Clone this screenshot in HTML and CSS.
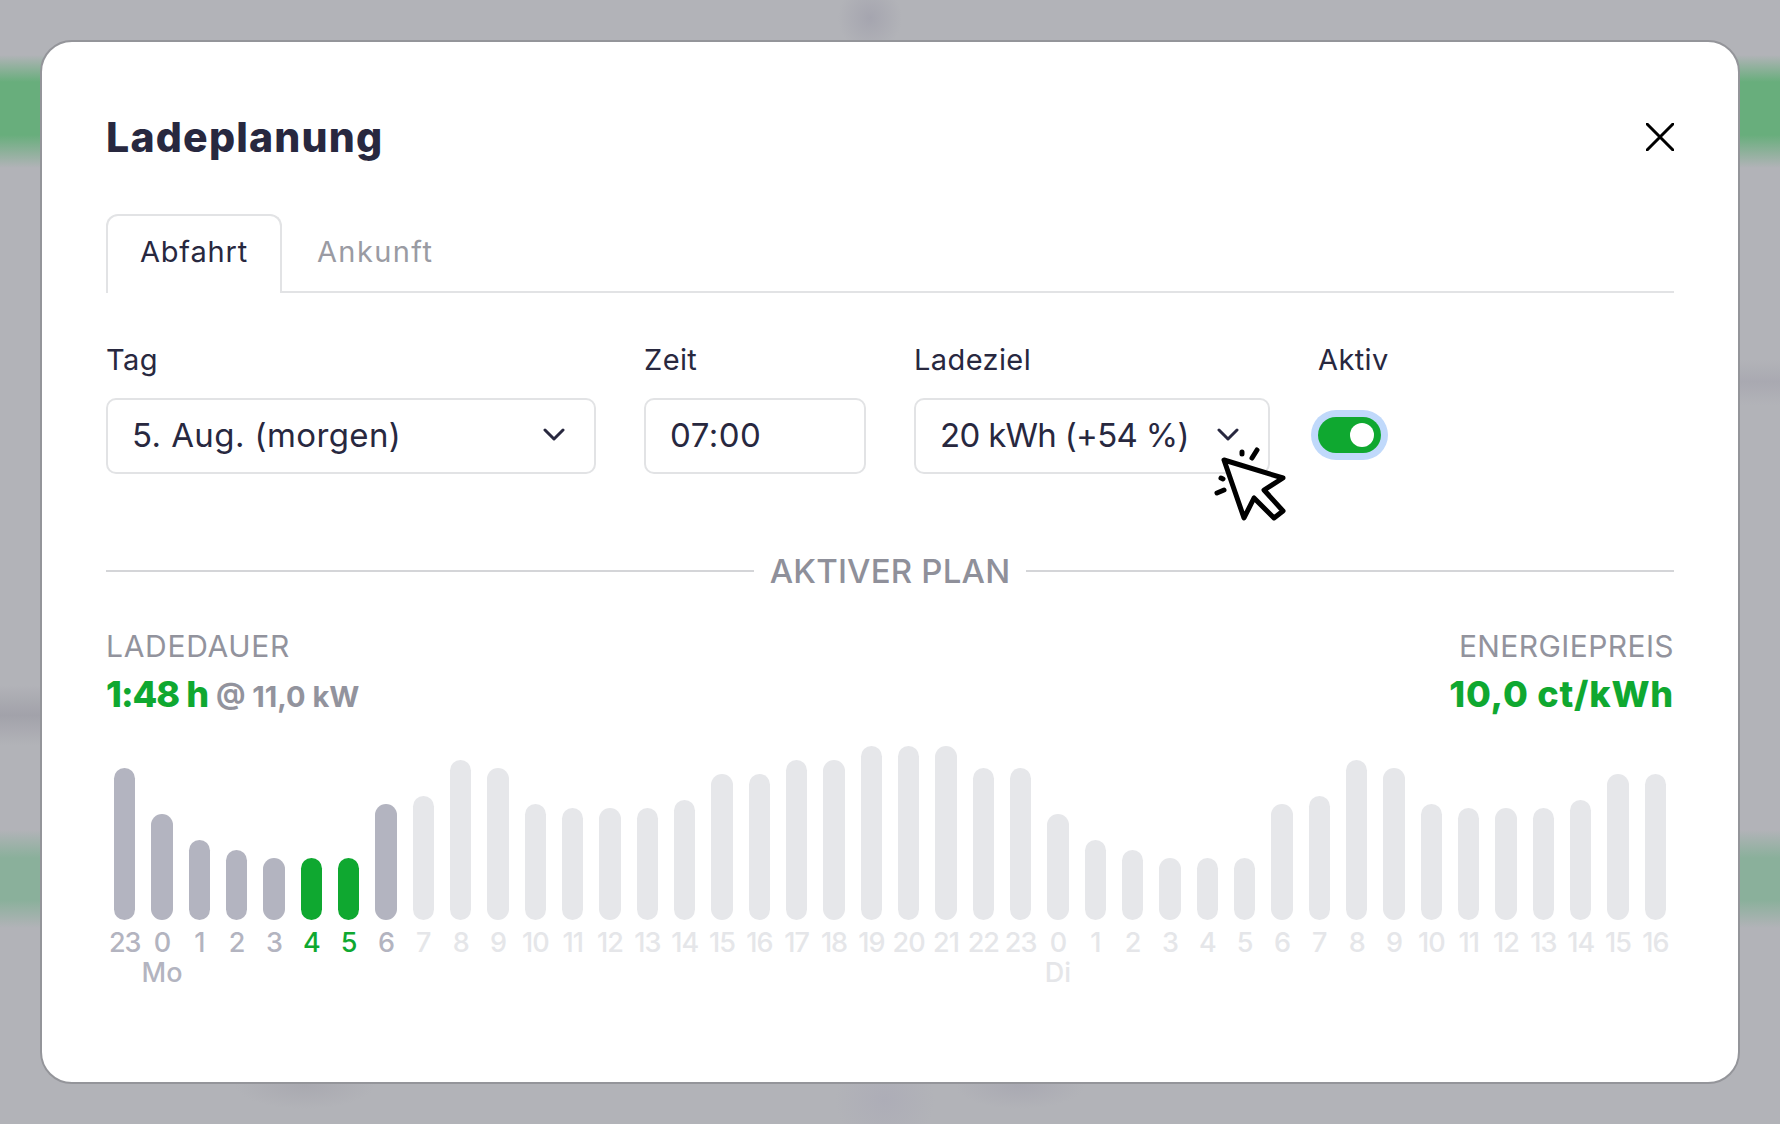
FILE: index.html
```html
<!DOCTYPE html>
<html lang="de">
<head>
<meta charset="utf-8">
<title>Ladeplanung</title>
<link rel="stylesheet" href="styles.css">
</head>
<body>
<section class="modal">
  <header class="head">
    <h1 class="title">Ladeplanung</h1>
    <svg class="close" viewBox="0 0 28 28" aria-label="Schließen"><path d="M1 1 27 27M27 1 1 27"/></svg>
  </header>
  <nav class="tabs">
    <div class="tab active">Abfahrt</div>
    <div class="tab">Ankunft</div>
  </nav>
  <div class="form">
    <div class="field f-tag">
      <label class="label">Tag</label>
      <div class="box"><span>5. Aug. (morgen)</span><svg class="chev" viewBox="0 0 22 14"><path d="M2 2 11 11 20 2"/></svg></div>
    </div>
    <div class="field f-zeit">
      <label class="label">Zeit</label>
      <div class="box"><span>07:00</span></div>
    </div>
    <div class="field f-ziel">
      <label class="label">Ladeziel</label>
      <div class="box"><span>20 kWh (+54 %)</span><svg class="chev" viewBox="0 0 22 14"><path d="M2 2 11 11 20 2"/></svg></div>
      <svg class="cursor" viewBox="0 0 84 82">
        <path class="c-arrow" d="M14 16 73 34 54 46 73 67 64 74 44 54 34 74Z"/>
        <path class="c-spark" d="M32 8 32 10M47 6 42 14M11 34 13 35M7 49 14 46"/>
      </svg>
    </div>
    <div class="field f-aktiv">
      <label class="label">Aktiv</label>
      <div class="toggle"><span class="knob"></span></div>
    </div>
  </div>
  <div class="divider"><span>AKTIVER PLAN</span></div>
  <div class="stats">
    <div>
      <div class="stat-label">LADEDAUER</div>
      <div class="stat-value"><span class="dur">1:48 h</span> <small>@ 11,0 kW</small></div>
    </div>
    <div class="right">
      <div class="stat-label">ENERGIEPREIS</div>
      <div class="stat-value price">10,0 ct/kWh</div>
    </div>
  </div>
  <div class="chart">
    <div class="slot past"><div class="plot"><i style="height:152px"></i></div><b>23</b></div>
    <div class="slot past"><div class="plot"><i style="height:106px"></i></div><b>0</b><em>Mo</em></div>
    <div class="slot past"><div class="plot"><i style="height:80px"></i></div><b>1</b></div>
    <div class="slot past"><div class="plot"><i style="height:70px"></i></div><b>2</b></div>
    <div class="slot past"><div class="plot"><i style="height:62px"></i></div><b>3</b></div>
    <div class="slot on"><div class="plot"><i style="height:62px"></i></div><b>4</b></div>
    <div class="slot on"><div class="plot"><i style="height:62px"></i></div><b>5</b></div>
    <div class="slot past"><div class="plot"><i style="height:116px"></i></div><b>6</b></div>
    <div class="slot"><div class="plot"><i style="height:124px"></i></div><b>7</b></div>
    <div class="slot"><div class="plot"><i style="height:160px"></i></div><b>8</b></div>
    <div class="slot"><div class="plot"><i style="height:152px"></i></div><b>9</b></div>
    <div class="slot"><div class="plot"><i style="height:116px"></i></div><b>10</b></div>
    <div class="slot"><div class="plot"><i style="height:112px"></i></div><b>11</b></div>
    <div class="slot"><div class="plot"><i style="height:112px"></i></div><b>12</b></div>
    <div class="slot"><div class="plot"><i style="height:112px"></i></div><b>13</b></div>
    <div class="slot"><div class="plot"><i style="height:120px"></i></div><b>14</b></div>
    <div class="slot"><div class="plot"><i style="height:146px"></i></div><b>15</b></div>
    <div class="slot"><div class="plot"><i style="height:146px"></i></div><b>16</b></div>
    <div class="slot"><div class="plot"><i style="height:160px"></i></div><b>17</b></div>
    <div class="slot"><div class="plot"><i style="height:160px"></i></div><b>18</b></div>
    <div class="slot"><div class="plot"><i style="height:174px"></i></div><b>19</b></div>
    <div class="slot"><div class="plot"><i style="height:174px"></i></div><b>20</b></div>
    <div class="slot"><div class="plot"><i style="height:174px"></i></div><b>21</b></div>
    <div class="slot"><div class="plot"><i style="height:152px"></i></div><b>22</b></div>
    <div class="slot"><div class="plot"><i style="height:152px"></i></div><b>23</b></div>
    <div class="slot"><div class="plot"><i style="height:106px"></i></div><b>0</b><em>Di</em></div>
    <div class="slot"><div class="plot"><i style="height:80px"></i></div><b>1</b></div>
    <div class="slot"><div class="plot"><i style="height:70px"></i></div><b>2</b></div>
    <div class="slot"><div class="plot"><i style="height:62px"></i></div><b>3</b></div>
    <div class="slot"><div class="plot"><i style="height:62px"></i></div><b>4</b></div>
    <div class="slot"><div class="plot"><i style="height:62px"></i></div><b>5</b></div>
    <div class="slot"><div class="plot"><i style="height:116px"></i></div><b>6</b></div>
    <div class="slot"><div class="plot"><i style="height:124px"></i></div><b>7</b></div>
    <div class="slot"><div class="plot"><i style="height:160px"></i></div><b>8</b></div>
    <div class="slot"><div class="plot"><i style="height:152px"></i></div><b>9</b></div>
    <div class="slot"><div class="plot"><i style="height:116px"></i></div><b>10</b></div>
    <div class="slot"><div class="plot"><i style="height:112px"></i></div><b>11</b></div>
    <div class="slot"><div class="plot"><i style="height:112px"></i></div><b>12</b></div>
    <div class="slot"><div class="plot"><i style="height:112px"></i></div><b>13</b></div>
    <div class="slot"><div class="plot"><i style="height:120px"></i></div><b>14</b></div>
    <div class="slot"><div class="plot"><i style="height:146px"></i></div><b>15</b></div>
    <div class="slot"><div class="plot"><i style="height:146px"></i></div><b>16</b></div>
  </div>
</section>
</body>
</html>
```
FILE: styles.css
```css
* { box-sizing: border-box; }
html, body { height: 100%; }
body {
  margin: 0;
  height: 1124px;
  overflow: hidden;
  padding: 40px 40px 0;
  font-family: Inter, "Liberation Sans", sans-serif;
  color: #28283f;
  background-color: #b2b3b8;
  background-repeat: no-repeat;
  background-image:
    linear-gradient(180deg, transparent 55px, #68ae7c 82px, #68ae7c 135px, transparent 168px),
    linear-gradient(180deg, transparent 830px, #8ab09b 858px, #8ab09b 900px, transparent 928px),
    radial-gradient(ellipse 32px 34px at 870px 18px, #a5a5af, transparent),
    radial-gradient(ellipse 70px 24px at 305px 1085px, #a9a9b0, transparent),
    radial-gradient(ellipse 65px 24px at 1020px 1085px, #a9a9b2, transparent),
    radial-gradient(ellipse 50px 46px at 885px 1100px, #adadb7, transparent),
    linear-gradient(180deg, transparent 685px, #a2a2aa 715px, transparent 745px),
    linear-gradient(180deg, transparent 360px, #a9a9b1 382px, transparent 405px);
  background-size: 100% 100%, 100% 100%, 100% 100%, 100% 100%, 100% 100%, 100% 100%, 41px 100%, 41px 100%;
  background-position: 0 0, 0 0, 0 0, 0 0, 0 0, 0 0, 0 0, 100% 0;
}
.modal {
  width: 1700px;
  height: 1044px;
  padding: 0 64px;
  background: #fff;
  border: 2px solid #94959a;
  border-radius: 32px;
}
.head {
  display: flex;
  align-items: center;
  justify-content: space-between;
  height: 172px;
  padding-top: 17px;
}
.title {
  margin: 0;
  font-size: 41px;
  font-weight: 800;
  letter-spacing: 1.2px;
}
.close { width: 28px; height: 28px; flex: none; }
.close path { fill: none; stroke: #000; stroke-width: 3; stroke-linecap: round; }
.tabs {
  display: flex;
  height: 79px;
  border-bottom: 2px solid #e2e3e5;
}
.tab {
  height: 79px;
  padding: 18px 33px 0;
  border: 2px solid transparent;
  border-bottom: 0;
  font-size: 29px;
  letter-spacing: 1.4px;
  color: #9a9ba3;
}
.tab.active {
  padding: 18px 32px 0;
  letter-spacing: 0.8px;
  color: #28283f;
  background: #fff;
  border-color: #e2e3e5;
  border-radius: 12px 12px 0 0;
}
.form {
  display: flex;
  gap: 48px;
  padding-top: 51px;
  height: 258px;
}
.field { position: relative; }
.f-tag { width: 490px; }
.f-zeit { width: 222px; }
.f-ziel { width: 356px; }
.label { display: block; font-size: 29px; letter-spacing: 0.4px; line-height: 32px; margin-bottom: 22px; }
.box {
  display: flex;
  align-items: center;
  justify-content: space-between;
  height: 76px;
  padding: 0 29px 2px 24px;
  border: 2px solid #e2e3e5;
  border-radius: 10px;
  font-size: 33px;
}
.f-tag .box { letter-spacing: 0.4px; }
.f-zeit .box { letter-spacing: 0.5px; }
.f-ziel .box { letter-spacing: -0.7px; }
.chev { width: 22px; height: 14px; flex: none; }
.chev path { fill: none; stroke: #28283f; stroke-width: 3; stroke-linecap: round; stroke-linejoin: round; }
.toggle {
  display: flex;
  align-items: center;
  justify-content: flex-end;
  width: 63px;
  height: 36px;
  margin-top: 41px;
  padding-right: 7px;
  background: #0fa830;
  border-radius: 18px;
  box-shadow: 0 0 0 7px #c0d9fb;
}
.knob { width: 24px; height: 24px; background: #fff; border-radius: 50%; }
.cursor { position: absolute; left: 296px; top: 100px; width: 84px; height: 82px; }
.c-arrow { fill: #fff; stroke: #000; stroke-width: 5; stroke-linejoin: round; }
.c-spark { fill: none; stroke: #000; stroke-width: 5; stroke-linecap: round; }
.divider {
  display: flex;
  align-items: center;
  gap: 16px;
  font-size: 33px;
  font-weight: 500;
  letter-spacing: 0.2px;
  color: #8f909a;
}
.divider::before, .divider::after { content: ""; flex: 1; height: 2px; background: #d4d5d8; }
.stats {
  display: flex;
  justify-content: space-between;
  margin-top: 39px;
}
.right { text-align: right; }
.stat-label { font-size: 30px; letter-spacing: 0.7px; line-height: 32px; color: #92939d; }
.right .stat-label { letter-spacing: 0.4px; }
.stat-value { font-size: 36px; line-height: 46px; margin-top: 9px; font-weight: 800; color: #0fa830; }
.dur { letter-spacing: -1px; }
.price { letter-spacing: 0.8px; }
.stat-value small { font-size: 29px; font-weight: 700; color: #92939d; }
.chart {
  display: grid;
  grid-template-columns: repeat(42, minmax(0, 1fr));
  margin-top: 26px;
}
.slot { display: flex; flex-direction: column; align-items: center; text-align: center; color: #e5e6e9; }
.plot { display: flex; align-items: flex-end; justify-content: center; width: 100%; height: 174px; }
.plot i { display: block; width: 21.5px; background: #e6e7ea; border-radius: 11px; }
.slot b { font-weight: 500; font-size: 27px; line-height: 30px; margin-top: 8px; letter-spacing: -1px; white-space: nowrap; }
.slot em { font-style: normal; font-weight: 500; font-size: 27px; line-height: 30px; }
.past { color: #b3b4c0; }
.past i { background: #b3b4c0; }
.on { color: #0fa830; }
.on i { background: #0fa830; }
```
